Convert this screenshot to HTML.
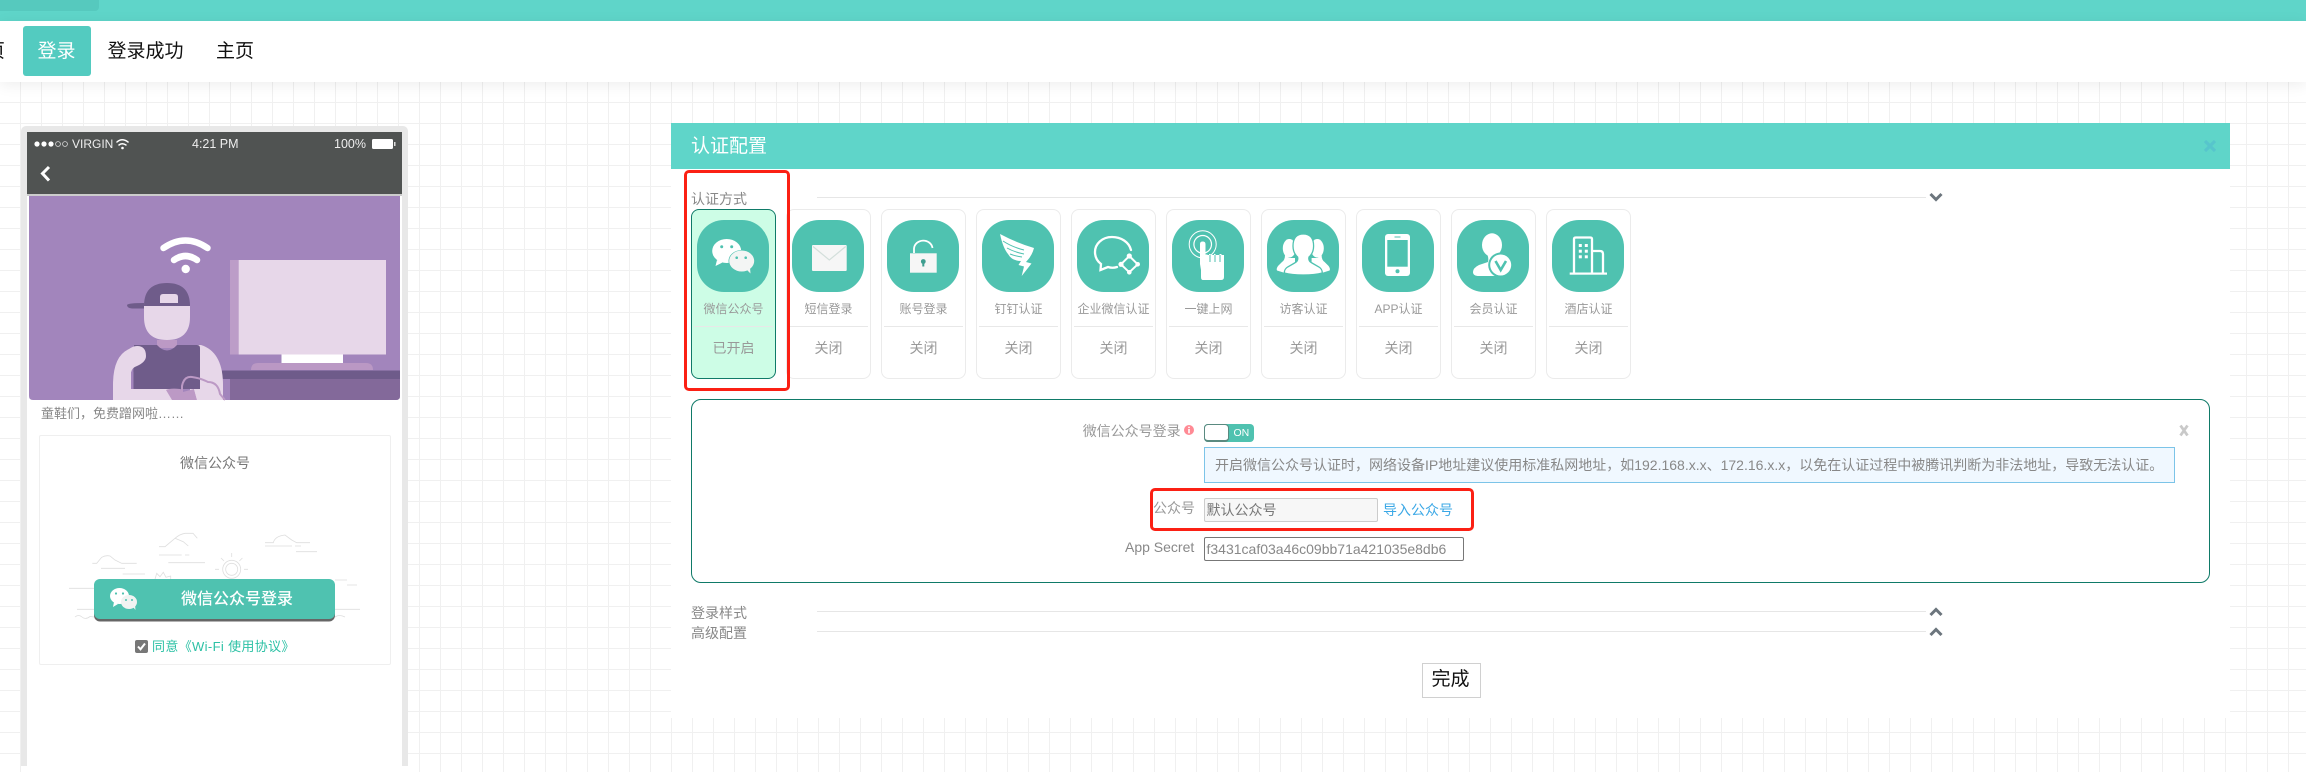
<!DOCTYPE html>
<html lang="zh"><head><meta charset="utf-8"><title>认证配置</title>
<style>
html,body{margin:0;padding:0}
body{width:2306px;height:749px;position:relative;overflow:hidden;background-color:#fff;
background-image:linear-gradient(to right,#f0f0f0 1px,transparent 1px),linear-gradient(to bottom,#f0f0f0 1px,transparent 1px);
background-size:21px 21px;background-position:20px 18px;
font-family:"Liberation Sans","Noto Sans CJK SC",sans-serif;color:#888}
.a{position:absolute;box-sizing:border-box}
.t{position:absolute;white-space:nowrap;line-height:20px;height:20px}
.card{position:absolute;top:209px;width:84.5px;height:169.5px;border:1px solid #ebebeb;border-radius:8px;background:#fff;box-sizing:border-box}
.card svg{position:absolute;left:5px;top:10px}
.card .l{position:absolute;left:0;right:0;top:89px;text-align:center;font-size:12px;line-height:20px;color:#999;white-space:nowrap}
.card .d{position:absolute;left:2px;right:2px;top:116px;height:1px;background:#e8e8e8}
.card .s{position:absolute;left:0;right:0;top:128px;text-align:center;font-size:14px;line-height:20px;color:#999}
.line{position:absolute;left:817px;width:1109px;height:1px;background:#e6e6e6}
.red{position:absolute;box-sizing:border-box;border:3.5px solid #fb2014;border-radius:5px}
</style></head><body>

<!-- top -->
<div class="a" style="left:0;top:0;width:2306px;height:21px;background:#5fd5c9"></div>
<div class="a" style="left:0;top:0;width:99px;height:11px;background:#56c9be;border-radius:0 0 4px 0"></div>
<div class="a" style="left:0;top:21px;width:2306px;height:61px;background:#fff;box-shadow:0 3px 14px rgba(0,0,0,.07)"></div>
<div class="t" style="left:-14px;top:42px;font-size:19px;color:#111">页</div>
<div class="a" style="left:23px;top:26px;width:68px;height:50px;background:#53cbc0;border-radius:3px"></div>
<div class="t" style="left:37.5px;top:42px;font-size:19px;color:#fff">登录</div>
<div class="t" style="left:107.5px;top:42px;font-size:19px;color:#111">登录成功</div>
<div class="t" style="left:216px;top:42px;font-size:19px;color:#111">主页</div>

<!-- phone -->
<div class="a" style="left:21px;top:126px;width:387px;height:640px;background:#e8e8e8;border-radius:5px 5px 0 0"></div>
<div class="a" style="left:27px;top:132px;width:375px;height:640px;background:#fff"></div>
<div class="a" style="left:27px;top:132px;width:375px;height:62px;background:#505352"></div>
<div class="a" style="left:27px;top:194px;width:375px;height:2px;background:#ccc"></div>

<svg class="a" style="left:0;top:0" width="450" height="749" viewBox="0 0 450 749" xmlns="http://www.w3.org/2000/svg">
  <!-- status -->
  <g fill="#fff"><circle cx="37" cy="144" r="2.6"/><circle cx="44" cy="144" r="2.6"/><circle cx="51" cy="144" r="2.6"/></g>
  <g fill="none" stroke="#ddd" stroke-width=".8"><circle cx="58" cy="144" r="2.4"/><circle cx="65" cy="144" r="2.4"/></g>
  <g fill="none" stroke="#fff" stroke-width="1.5" stroke-linecap="round"><path d="M117 142q5-4.500 11 0"/><path d="M119 145q3-2.500 7 0"/></g><circle cx="122.500" cy="148" r="1.300" fill="#fff"/>
  <rect x="372" y="139" width="21" height="10" rx="1.500" fill="#fff"/><rect x="394" y="142" width="1.500" height="4" fill="#ddd"/>
  <path d="M49 167l-6.500 6.500 6.500 7" fill="none" stroke="#fff" stroke-width="3"/>
  <!-- illustration -->
  <path d="M29 196H400V396q0 4-4 4H33q-4 0-4-4Z" fill="#a285bc"/>
  <rect x="230" y="260" width="9" height="94.500" fill="#bc9dc8"/>
  <rect x="238.700" y="260" width="147.300" height="94.500" fill="#e7d7e9"/>
  <rect x="281.500" y="354.500" width="61.500" height="8.500" fill="#fff"/>
  <path d="M251 370q0-7 7-7H366q7 0 7 7Z" fill="#ba98c4"/>
  <rect x="222" y="370.500" width="178" height="8.500" fill="#6e5b8a"/>
  <path d="M230 379H400V396q0 4-4 4H230Z" fill="#83699a"/>
  <!-- wifi -->
  <g fill="none" stroke="#fff" stroke-width="6.500" stroke-linecap="round"><path d="M163.500 248q22-15 44 0"/><path d="M174 260q11.500-8 23 0"/></g>
  <circle cx="185.700" cy="269" r="4.200" fill="#fff"/>
  <!-- person -->
  <path d="M157 340H177V348H157Z" fill="#bc99c5"/>
  <path d="M144 306H190V317Q190 340 167 340T144 317Z" fill="#e7d7e9"/>
  <path d="M144 306Q144 283 167 283T190 306Z" fill="#6f5c8a"/>
  <path d="M127 305Q128 303 144 303V308.500H132Q127 308 127 305Z" fill="#6f5c8a"/>
  <path d="M160 303V297Q160 294 163 294H175Q178 294 178 297V303Z" fill="#e7d7e9"/>
  <path d="M200 345L201 345Q223 352 223 385V400H190V345Z" fill="#e7d7e9"/>
  <path d="M134 345H157Q167 356 177 345H197Q200 345 200 348V389H133Z" fill="#6f5c8a"/>
  <path d="M129 349Q113 356 113 385V400H172V389H134Q131 389 131 386V374Q131 368 137 366Q146 362 146 356Q146 346 137 346Q133 346 129 349Z" fill="#e7d7e9"/>
  <rect x="131" y="372" width="2.500" height="17" fill="#a285bc"/>
  <path d="M166 390Q170 388 180 389L183 392L194 389L197 400H172Z" fill="#bc99c5"/>
  <path d="M194 389Q210 392 214 400H197Z" fill="#e7d7e9"/>
  <path d="M182 392V386Q184 376 192 377Q200 378 208 382Q218 382 220 394L225 400" fill="none" stroke="#bc99c5" stroke-width="2"/>
  <!-- clouds -->
  <g fill="none" stroke="#dedede" stroke-width=".8">
    <path d="M159 546.700H165L175 538.300Q180 534 185 533.300H193L197.300 538.300"/><path d="M175 538.300L183.300 541.700 188.300 546"/>
    <path d="M159 555H181.700M185 555H189.300"/><path d="M168.300 562.700H205"/>
    <path d="M265 542.700H273.300Q275 536 285 535L291.700 540 296.700 542.700H310"/><path d="M265 546H292M295 546H301"/><path d="M296 551.700H317"/>
    <path d="M92.300 563.300H96.700L101.700 557.300Q106 555 110 556L115 560 121.700 563.300H136.700"/><path d="M101 568.300H125"/><path d="M122.700 574H145"/>
    <path d="M155 579.300L156.700 573.300 160 576.700 163.300 572.300 166 577.300 170.700 576V579.300"/>
    <circle cx="231.700" cy="569.300" r="9"/><circle cx="231.700" cy="569.300" r="6"/>
    <path d="M231.700 553V557M221 558L224 561M242.400 558L239.400 561M215 569.300H219M244 569.300H248"/>
    <path d="M69 588.300H94"/><path d="M335 580H347M347 585H357"/><path d="M77 609.300H94M335 609.300H360"/>
    <path d="M75 617Q78.500 614 82 617T90 616.500L94 617"/><path d="M335 617Q339 614 345 617"/>
  </g>
</svg>

<div class="t" style="left:72px;top:134px;font-size:12px;color:#eee">VIRGIN</div>
<div class="t" style="left:192px;top:134px;font-size:12.500px;color:#eee">4:21 PM</div>
<div class="t" style="left:334px;top:134px;font-size:12.500px;color:#eee">100%</div>
<div class="t" style="left:41px;top:404px;font-size:13px;color:#888">童鞋们，免费蹭网啦……</div>
<div class="a" style="left:39px;top:435px;width:352px;height:230px;border:1px solid #efefef;border-radius:2px"></div>
<div class="t" style="left:180px;top:453px;font-size:14px;color:#777">微信公众号</div>
<div class="a" style="left:94px;top:579px;width:241px;height:40px;background:#4fc2b0;border-radius:6px;box-shadow:0 2.500px 0 #666"></div>
<svg class="a" style="left:108px;top:585px" width="34" height="28" viewBox="0 0 34 28">
  <ellipse cx="11.500" cy="11" rx="9.500" ry="8" fill="#fff"/><path d="M6 17l-1 5 5-3z" fill="#fff"/>
  <ellipse cx="21" cy="17" rx="8" ry="7" fill="#f1f3f2"/><path d="M25 22l2.500 3-.5-5z" fill="#f1f3f2"/>
  <g fill="#4fc2b0"><circle cx="8" cy="8.500" r="1.100"/><circle cx="15" cy="8.500" r="1.100"/><circle cx="18" cy="15" r="1"/><circle cx="24" cy="15" r="1"/></g>
</svg>
<div class="t" style="left:181px;top:590px;font-size:16px;color:#fff;font-weight:500">微信公众号登录</div>
<div class="a" style="left:135px;top:640px;width:13px;height:13px;background:#777;border-radius:2px"></div>
<svg class="a" style="left:135px;top:640px" width="13" height="13" viewBox="0 0 13 13"><path d="M3 6.500l2.500 2.800L10 3.500" fill="none" stroke="#fff" stroke-width="2"/></svg>
<div class="t" style="left:152px;top:636.500px;font-size:13px;color:#2cc1a5;letter-spacing:.35px">同意《Wi-Fi 使用协议》</div>

<!-- panel -->
<div class="a" style="left:671px;top:123px;width:1559px;height:595px;background:#fff"></div>
<div class="a" style="left:671px;top:123px;width:1559px;height:46px;background:#5fd5c9"></div>
<div class="t" style="left:691px;top:137px;font-size:19px;color:#fff">认证配置</div>
<svg class="a" style="left:2203px;top:139px" width="14" height="14" viewBox="0 0 14 14"><path d="M2 2L12 12M12 2L2 12" stroke="#57c5cc" stroke-width="3.200"/></svg>

<div class="t" style="left:691px;top:189px;font-size:14px;color:#888">认证方式</div>
<div class="line" style="top:197px"></div>
<svg class="a" style="left:1929px;top:192px" width="14" height="10" viewBox="0 0 14 10"><path d="M1.500 2L7 7.500 12.500 2" fill="none" stroke="#6c757d" stroke-width="3"/></svg>

<!-- cards -->
<div class="card" style="left:691.300px;background:#cdfde6;border-color:#0f7a68">
<svg width="72" height="72" viewBox="0 0 72 72"><rect width="72" height="72" rx="27" fill="#4fc2b0"/>
<ellipse cx="29.700" cy="31" rx="14.500" ry="12" fill="#fff"/><path d="M20 40l-1.500 6 7-3.500z" fill="#fff"/>
<ellipse cx="44.700" cy="41" rx="13.200" ry="11" fill="#4fc2b0"/><ellipse cx="44.700" cy="41" rx="12.500" ry="10.500" fill="#f3f5f4"/><path d="M50 50l3.500 3.500-.5-6z" fill="#f3f5f4"/>
<g fill="#4fc2b0"><circle cx="24.700" cy="26.700" r="1.500"/><circle cx="34.700" cy="26.700" r="1.500"/><circle cx="39.700" cy="37.700" r="1.300"/><circle cx="48.700" cy="37.700" r="1.300"/></g></svg>
<div class="d"></div><div class="l">微信公众号</div><div class="s">已开启</div></div>

<div class="card" style="left:786.300px">
<svg width="72" height="72" viewBox="0 0 72 72"><rect width="72" height="72" rx="27" fill="#4fc2b0"/>
<rect x="20" y="25" width="34.700" height="26" rx="1" fill="#f6f6f6"/><path d="M21 26.500L37.300 40 53.700 26.500" fill="none" stroke="#d3dfdb" stroke-width="1.200"/></svg>
<div class="d"></div><div class="l">短信登录</div><div class="s">关闭</div></div>

<div class="card" style="left:881.300px">
<svg width="72" height="72" viewBox="0 0 72 72"><rect width="72" height="72" rx="27" fill="#4fc2b0"/>
<path d="M27 33V28.500A9.300 8.500 0 0 1 45.500 28" fill="none" stroke="#fff" stroke-width="1.800"/>
<rect x="23" y="33.300" width="26.700" height="19.400" fill="#f6f6f6"/>
<circle cx="36.300" cy="41.500" r="2.400" fill="#3f9e90"/><rect x="35.300" y="42" width="2" height="4.500" fill="#3f9e90"/></svg>
<div class="d"></div><div class="l">账号登录</div><div class="s">关闭</div></div>

<div class="card" style="left:976.300px">
<svg width="72" height="72" viewBox="0 0 72 72"><rect width="72" height="72" rx="27" fill="#4fc2b0"/>
<path d="M18 14Q35 23 52 28Q50 36 44 42L49.500 43.500 39.700 56 42 46.500 36.500 45 39 41Q30 41 26 34Q21 28 18 14Z" fill="#fff"/>
<path d="M21 21Q30 27 42 30M25 28Q32 32 42 34M28 34Q33 36 40 37" fill="none" stroke="#4fc2b0" stroke-width="1"/></svg>
<div class="d"></div><div class="l">钉钉认证</div><div class="s">关闭</div></div>

<div class="card" style="left:1071.300px">
<svg width="72" height="72" viewBox="0 0 72 72"><rect width="72" height="72" rx="27" fill="#4fc2b0"/>
<path d="M54 30C52 22 44 17 35 17C25 17 18 24 18 32C18 37 20 41 24 44L23.500 50 31 47C34 48 37 48 40 47" fill="none" stroke="#fff" stroke-width="2.300" stroke-linecap="round"/>
<path d="M52.300 36L60.700 44.300 52.300 52.300 44 44.300Z" fill="none" stroke="#fff" stroke-width="2"/>
<g fill="#fff"><circle cx="52.300" cy="36" r="2.600"/><circle cx="60.700" cy="44.300" r="2.300"/><circle cx="52.300" cy="52.300" r="2.300"/><circle cx="44" cy="44.300" r="2.600"/></g></svg>
<div class="d"></div><div class="l">企业微信认证</div><div class="s">关闭</div></div>

<div class="card" style="left:1166.300px">
<svg width="72" height="72" viewBox="0 0 72 72"><rect width="72" height="72" rx="27" fill="#4fc2b0"/>
<circle cx="30.700" cy="24.300" r="13.500" fill="none" stroke="#fff" stroke-width="1"/><circle cx="30.700" cy="24.300" r="8.800" fill="none" stroke="#fff" stroke-width="1.200"/>
<path d="M28 24Q28 21.500 30.700 21.500T33.500 24V34.500H35.500V35H37V34H38.500V35H42V34H43.500V35H47.500V34H49.500V35H52V57Q52 60 49 60H31Q29 60 29 57V50L28 44Z" fill="#fff"/>
<path d="M38 35V42M43 35V42M48 35V42" stroke="#4fc2b0" stroke-width="1"/></svg>
<div class="d"></div><div class="l">一键上网</div><div class="s">关闭</div></div>

<div class="card" style="left:1261.300px">
<svg width="72" height="72" viewBox="0 0 72 72"><rect width="72" height="72" rx="27" fill="#4fc2b0"/>
<ellipse cx="22.300" cy="28.300" rx="6.500" ry="9.300" fill="#fff"/>
<path d="M18 35Q18 40 15 42L11 46Q9 49 10 50.500L18 53H28V38H22Z" fill="#fff"/>
<ellipse cx="50.300" cy="28.300" rx="6.500" ry="9.300" fill="#fff"/>
<path d="M54.600 35Q54.600 40 57.600 42L61.600 46Q63.600 49 62.600 50.500L54.600 53H44.600V38H50.600Z" fill="#fff"/>
<path d="M26 26Q26 14 36.300 14T46.600 26Q46.600 33 42 37Q41 41 45 43L52 47Q55.300 49 55.300 53Q48 55 36.300 55T17.300 53Q17.300 49 20.600 47L27.600 43Q31.600 41 30.600 37Q26 33 26 26Z" fill="#fff" stroke="#4fc2b0" stroke-width="1.300"/></svg>
<div class="d"></div><div class="l">访客认证</div><div class="s">关闭</div></div>

<div class="card" style="left:1356.300px">
<svg width="72" height="72" viewBox="0 0 72 72"><rect width="72" height="72" rx="27" fill="#4fc2b0"/>
<rect x="23" y="14" width="25" height="42" rx="3" fill="#fff"/><rect x="25.300" y="20" width="20.400" height="26.700" fill="#4fc2b0"/>
<rect x="32.500" y="16.500" width="6" height="1" fill="#4fc2b0"/><circle cx="35.500" cy="51.300" r="2" fill="#4fc2b0"/></svg>
<div class="d"></div><div class="l">APP认证</div><div class="s">关闭</div></div>

<div class="card" style="left:1451.300px">
<svg width="72" height="72" viewBox="0 0 72 72"><rect width="72" height="72" rx="27" fill="#4fc2b0"/>
<ellipse cx="35" cy="25" rx="10" ry="11.700" fill="#fff"/>
<path d="M30 34H40L37 40Q37 43 40 45V56H22Q16 56 16 52Q16 48 22 45L31 42Q32 38 30 34Z" fill="#fff"/>
<circle cx="43.700" cy="45" r="12.500" fill="#4fc2b0"/><circle cx="43.700" cy="45" r="10.500" fill="#fff"/>
<circle cx="43.700" cy="45" r="8.500" fill="none" stroke="#fff" stroke-width="1"/>
<path d="M38.500 41L43.700 50 49 41" fill="none" stroke="#4fc2b0" stroke-width="2.600"/></svg>
<div class="d"></div><div class="l">会员认证</div><div class="s">关闭</div></div>

<div class="card" style="left:1546.300px">
<svg width="72" height="72" viewBox="0 0 72 72"><rect width="72" height="72" rx="27" fill="#4fc2b0"/>
<path d="M22 53V19Q22 17.500 24 17.500H38Q40 17.500 40 19V53" fill="none" stroke="#fff" stroke-width="2.300"/>
<path d="M40 31H48Q51 31 51 34V53" fill="none" stroke="#fff" stroke-width="2.300"/>
<rect x="17.700" y="52.500" width="37.300" height="2.200" fill="#fff"/>
<g fill="#fff"><rect x="26.800" y="24" width="3" height="3"/><rect x="32.800" y="24" width="3" height="3"/><rect x="26.800" y="29.700" width="3" height="3"/><rect x="32.800" y="29.700" width="3" height="3"/><rect x="26.800" y="35.300" width="3" height="3"/><rect x="32.800" y="35.300" width="3" height="3"/></g></svg>
<div class="d"></div><div class="l">酒店认证</div><div class="s">关闭</div></div>

<div class="red" style="left:684px;top:170px;width:105.500px;height:221px"></div>

<!-- green box -->
<div class="a" style="left:691px;top:399px;width:1519px;height:184px;border:1.500px solid #0f7a68;border-radius:10px;background:#fff"></div>
<svg class="a" style="left:2178px;top:424px" width="12" height="13" viewBox="0 0 12 13"><path d="M2.500 1.500L9.500 11.500M9.500 1.500L2.500 11.500" stroke="#c9c9c9" stroke-width="2.800"/></svg>

<div class="t" style="left:1082.700px;top:421px;font-size:14px;color:#999">微信公众号登录</div>
<svg class="a" style="left:1184px;top:425px" width="10" height="10" viewBox="0 0 10 10"><circle cx="5" cy="5" r="5" fill="#ff8a94"/><rect x="4.200" y="1.700" width="1.600" height="1.400" fill="#fff"/><rect x="4.200" y="4" width="1.600" height="4.300" fill="#fff"/></svg>
<div class="a" style="left:1204px;top:424px;width:50px;height:18px;background:#4fc2b0;border-radius:4px"></div>
<div class="a" style="left:1204px;top:424px;width:25px;height:18px;background:#fff;border:1px solid #5a8a80;border-bottom-width:2px;border-radius:4px"></div>
<div class="t" style="left:1233.500px;top:423px;font-size:10.500px;color:#fff">ON</div>

<div class="a" style="left:1204px;top:447px;width:971px;height:36px;background:#f0f8ff;border:1px solid #7cc4e8"></div>
<div class="t" style="left:1215px;top:455px;font-size:14px;color:#888">开启微信公众号认证时，网络设备IP地址建议使用标准私网地址，如192.168.x.x、172.16.x.x，以免在认证过程中被腾讯判断为非法地址，导致无法认证。</div>

<div class="t" style="left:1153px;top:498px;font-size:14px;color:#999">公众号</div>
<div class="a" style="left:1204px;top:498px;width:174px;height:24px;background:#f7f7f7;border:1px solid #ccc;border-radius:2px"></div>
<div class="t" style="left:1206.500px;top:500px;font-size:14px;color:#777">默认公众号</div>
<div class="t" style="left:1383px;top:500px;font-size:14px;color:#3ba8e6">导入公众号</div>
<div class="red" style="left:1150px;top:487.500px;width:324px;height:43px"></div>

<div class="t" style="left:1125px;top:537px;font-size:14px;color:#888">App Secret</div>
<div class="a" style="left:1204px;top:537px;width:260px;height:24px;background:#fff;border:1px solid #777;border-radius:2px"></div>
<div class="t" style="left:1206.500px;top:539px;font-size:14px;color:#888">f3431caf03a46c09bb71a421035e8db6</div>

<div class="t" style="left:691px;top:603px;font-size:14px;color:#888">登录样式</div>
<div class="line" style="top:611px"></div>
<svg class="a" style="left:1929px;top:607px" width="14" height="10" viewBox="0 0 14 10"><path d="M1.500 8L7 2.500 12.500 8" fill="none" stroke="#6c757d" stroke-width="3"/></svg>
<div class="t" style="left:691px;top:623px;font-size:14px;color:#888">高级配置</div>
<div class="line" style="top:631px"></div>
<svg class="a" style="left:1929px;top:627px" width="14" height="10" viewBox="0 0 14 10"><path d="M1.500 8L7 2.500 12.500 8" fill="none" stroke="#6c757d" stroke-width="3"/></svg>

<div class="a" style="left:1421.500px;top:663px;width:59px;height:35px;background:#fff;border:1px solid #d0d0d0"></div>
<div class="t" style="left:1431.500px;top:670px;font-size:19px;color:#111">完成</div>
</body></html>
